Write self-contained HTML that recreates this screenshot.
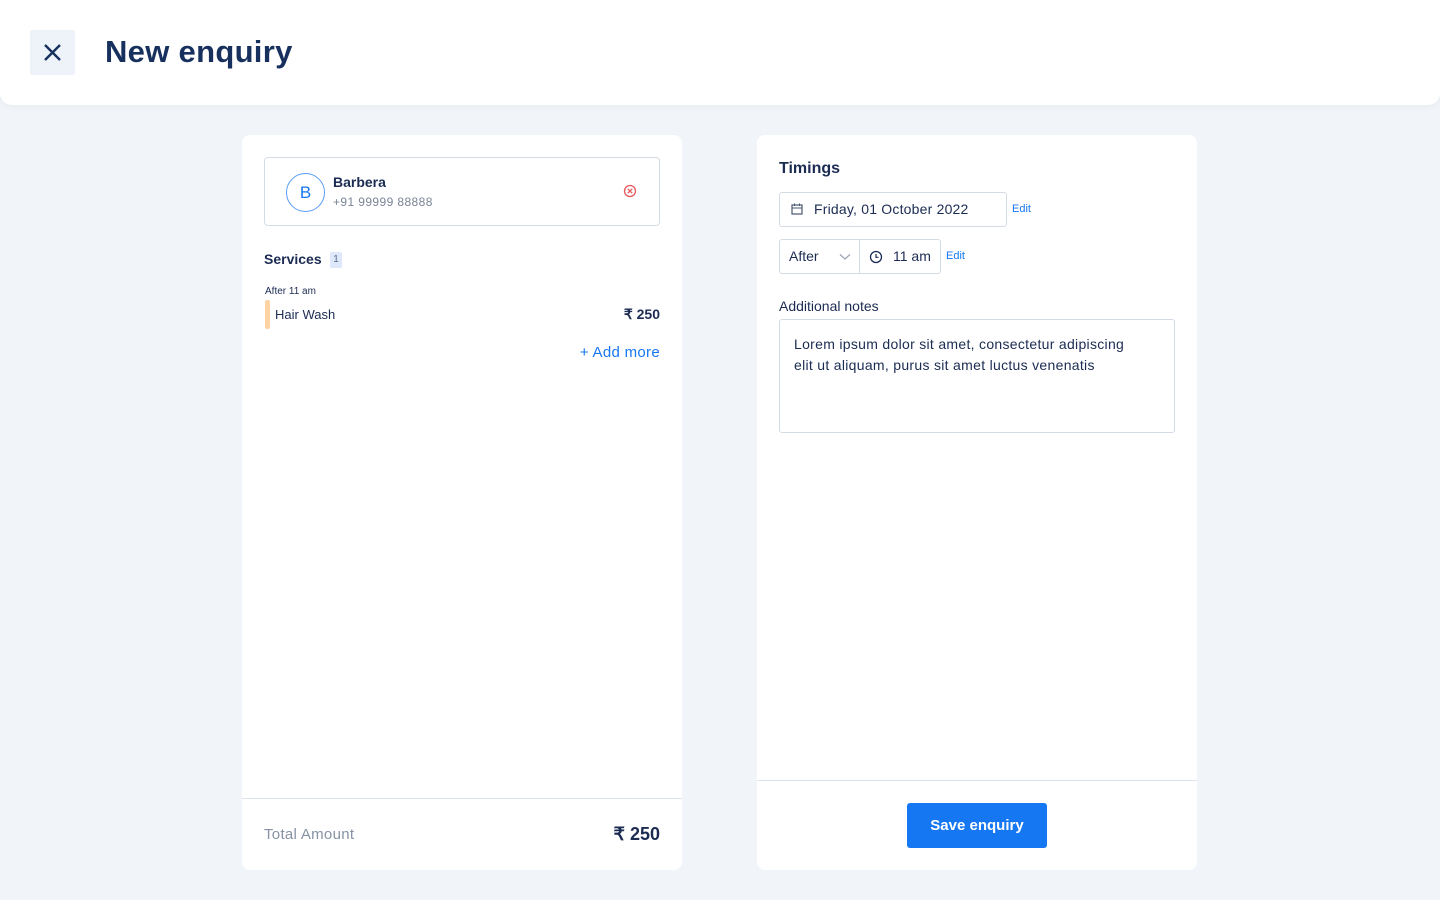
<!DOCTYPE html>
<html><head><style>
*{box-sizing:border-box;margin:0;padding:0}
body{width:1440px;height:900px;background:#f1f5fa;font-family:"Liberation Sans",sans-serif;color:#1b2b52;position:relative;overflow:hidden}
.hdr{position:absolute;left:0;top:0;width:1440px;height:105px;background:#fff;border-radius:0 0 12px 12px;box-shadow:0 2px 8px rgba(0,0,0,.04)}
.xb{position:absolute;left:30px;top:30px;width:45px;height:45px;background:#eef3fa;border-radius:2px}
.hdr h1{position:absolute;left:105px;top:34px;font-size:31px;font-weight:bold;color:#17305e;letter-spacing:0.3px}
.card{position:absolute;top:135px;width:440px;height:735px;background:#fff;border-radius:8px}
.abs{position:absolute}
.blue{color:#1677f2}
</style></head><body>
<div class="hdr"><div class="xb"><svg width="45" height="45"><path d="M15 15L30 30M30 15L15 30" stroke="#17305e" stroke-width="2.4"/></svg></div><h1>New enquiry</h1></div>

<div class="card" style="left:242px">
 <div class="abs" style="left:22px;top:22px;width:396px;height:69px;border:1px solid #d5dbe4;border-radius:4px">
  <div class="abs" style="left:21px;top:15px;width:39px;height:39px;border:1px solid #5a9df5;border-radius:50%;text-align:center;line-height:37px;font-size:17px;color:#1677f2">B</div>
  <div class="abs" style="left:68px;top:16px;font-size:14px;font-weight:bold">Barbera</div>
  <div class="abs" style="left:68px;top:37px;font-size:12px;color:#7a8496;letter-spacing:0.4px">+91 99999 88888</div>
  <svg class="abs" style="left:358px;top:26px" width="14" height="14"><circle cx="7" cy="7" r="5.5" fill="none" stroke="#e5595b" stroke-width="1.3"/><path d="M4.8 4.8L9.2 9.2M9.2 4.8L4.8 9.2" stroke="#e5595b" stroke-width="1.3"/></svg>
 </div>
 <div class="abs" style="left:22px;top:116px;font-size:14px;font-weight:bold">Services</div>
 <div class="abs" style="left:88px;top:117px;width:12px;height:16px;background:#dde9fb;border-radius:2px;font-size:10px;text-align:center;line-height:16px;color:#5a6b88">1</div>
 <div class="abs" style="left:23px;top:151px;font-size:10px">After 11 am</div>
 <div class="abs" style="left:23px;top:165px;width:5px;height:29px;background:#fdd3a3;border-radius:2px"></div>
 <div class="abs" style="left:33px;top:172px;font-size:13px">Hair Wash</div>
 <div class="abs" style="right:22px;top:171px;font-size:14px;font-weight:bold">₹ 250</div>
 <div class="abs blue" style="right:22px;top:209px;font-size:15px;letter-spacing:0.3px">+ Add more</div>
 <div class="abs" style="left:0;top:663px;width:440px;border-top:1px solid #dce2ea"></div>
 <div class="abs" style="left:22px;top:691px;font-size:15px;color:#8792a4;letter-spacing:0.3px">Total Amount</div>
 <div class="abs" style="right:22px;top:689px;font-size:18px;font-weight:bold">₹ 250</div>
</div>

<div class="card" style="left:757px">
 <div class="abs" style="left:22px;top:25px;font-size:16px;font-weight:bold">Timings</div>
 <div class="abs" style="left:22px;top:57px;width:228px;height:35px;border:1px solid #d5dbe4;border-radius:3px">
  <svg class="abs" style="left:11px;top:10px" width="12" height="12"><rect x="1" y="2" width="10" height="9" fill="none" stroke="#4a5670" stroke-width="1.2"/><path d="M1 5H11M3.5 0.5V3M8.5 0.5V3" stroke="#4a5670"/></svg>
  <div class="abs" style="left:34px;top:8px;font-size:14px;letter-spacing:0.2px">Friday, 01 October 2022</div>
 </div>
 <div class="abs blue" style="left:255px;top:68px;font-size:11px">Edit</div>
 <div class="abs" style="left:22px;top:104px;width:162px;height:35px;border:1px solid #d5dbe4;border-radius:3px">
  <div class="abs" style="left:9px;top:8px;font-size:14px">After</div>
  <svg class="abs" style="left:59px;top:13px" width="12" height="8"><path d="M1 1.5L6 6L11 1.5" fill="none" stroke="#9aa3b2" stroke-width="1.2"/></svg>
  <div class="abs" style="left:79px;top:0;height:33px;border-left:1px solid #d5dbe4"></div>
  <svg class="abs" style="left:89px;top:10px" width="14" height="14"><circle cx="7" cy="7" r="5.5" fill="none" stroke="#1b2b52" stroke-width="1.3"/><path d="M7 4V7.3H9.5" fill="none" stroke="#1b2b52" stroke-width="1.2"/></svg>
  <div class="abs" style="left:113px;top:8px;font-size:14px">11 am</div>
 </div>
 <div class="abs blue" style="left:189px;top:115px;font-size:11px">Edit</div>
 <div class="abs" style="left:22px;top:163px;font-size:14px">Additional notes</div>
 <div class="abs" style="left:22px;top:184px;width:396px;height:114px;border:1px solid #d5dbe4;border-radius:3px;padding:14px 14px;font-size:14px;line-height:21px;letter-spacing:0.3px">Lorem ipsum dolor sit amet, consectetur adipiscing<br>elit ut aliquam, purus sit amet luctus venenatis</div>
 <div class="abs" style="left:0;top:645px;width:440px;border-top:1px solid #dce2ea"></div>
 <div class="abs" style="left:150px;top:668px;width:140px;height:45px;background:#1677f2;border-radius:3px;color:#fff;font-size:15px;font-weight:bold;text-align:center;line-height:45px">Save enquiry</div>
</div>
</body></html>
